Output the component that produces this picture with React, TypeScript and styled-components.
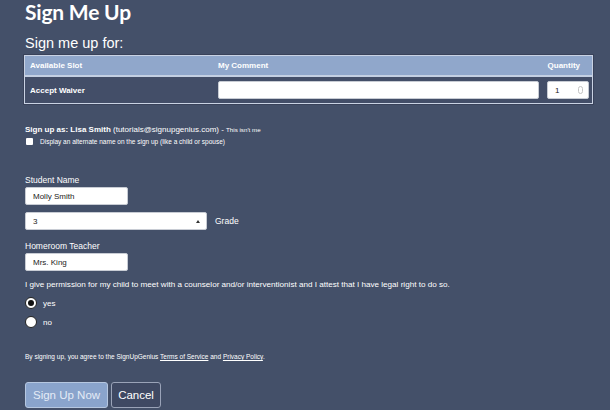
import React from "react";
import styled, { createGlobalStyle } from "styled-components";

const GlobalStyle = createGlobalStyle`
  html, body {
    margin: 0;
    padding: 0;
    background: #445069;
    overflow: hidden;
  }
  body {
    font-family: "Liberation Sans", Arial, sans-serif;
    color: #ffffff;
  }
`;

const Page = styled.div`
  width: 610px;
  height: 410px;
  padding: 0 17px 0 24px;
  box-sizing: border-box;
  background: #445069;
`;

const Title = styled.h1`
  margin: 0;
  padding: 1px 0 0 1px;
  font-family: Lato, "Open Sans", sans-serif;
  font-weight: 700;
  font-size: 21px;
  line-height: 22px;
  letter-spacing: -0.2px;
  color: #ffffff;
`;

const SubTitle = styled.h2`
  margin: 10px 0 0 1px;
  font-weight: 400;
  font-size: 14.5px;
  line-height: 20px;
  color: #ffffff;
`;

const Table = styled.div`
  margin-top: 2px;
  border: 1px solid #c9d2e3;
  box-shadow: 0 0 0 1px #39425a;
`;

const HeaderRow = styled.div`
  display: grid;
  grid-template-columns: 188px 1fr 60px;
  height: 19px;
  align-items: center;
  background: #90a7cb;
  border-bottom: 2px solid #c3cfe2;
  font-size: 8px;
  font-weight: 700;
  padding: 0 5px;
`;

const BodyRow = styled.div`
  display: grid;
  grid-template-columns: 180px 1fr 42px;
  column-gap: 8px;
  height: 26px;
  align-items: center;
  padding: 0 3px 0 5px;
  font-size: 8px;
  font-weight: 700;
  background: #434e68;
`;

const HeadCell = styled.span<{ $right?: boolean }>`
  text-align: ${(p) => (p.$right ? "right" : "left")};
  padding-right: ${(p) => (p.$right ? "7px" : "0")};
`;

const TextBox = styled.div<{ $w?: number }>`
  width: ${(p) => (p.$w ? `${p.$w}px` : "auto")};
  height: 18px;
  background: #ffffff;
  border-radius: 2px;
  border: 1px solid #c8ccd4;
  box-sizing: border-box;
  color: #222;
  font-size: 8px;
  font-weight: 400;
  display: flex;
  align-items: center;
  padding-left: 7px;
  position: relative;
`;

const Spinner = styled.span`
  position: absolute;
  right: 5px;
  top: 4px;
  width: 5px;
  height: 8px;
  border-radius: 3px;
  border: 1px solid #c4c4c4;
  box-sizing: border-box;
`;

const SignUpAs = styled.div`
  margin-top: 21px;
  font-size: 8px;
  padding-left: 1px;
  b {
    font-weight: 700;
  }
  small {
    font-size: 6.2px;
  }
`;

const CheckRow = styled.label`
  display: flex;
  align-items: center;
  gap: 7px;
  margin-top: 4px;
  font-size: 6.5px;
  padding-left: 2px;
`;

const Box = styled.span`
  width: 7px;
  height: 7px;
  background: #ffffff;
  border-radius: 1px;
`;

const Field = styled.div<{ $top: number }>`
  margin-top: ${(p) => p.$top}px;
  padding-left: 1px;
`;

const Label = styled.div`
  font-size: 8.5px;
  line-height: 10px;
  margin-bottom: 2px;
`;

const SelectRow = styled.div`
  display: flex;
  align-items: center;
  gap: 8px;
  margin-top: 7px;
  padding-left: 1px;
  font-size: 8.5px;
`;

const Caret = styled.span`
  position: absolute;
  right: 6px;
  top: 7px;
  width: 0;
  height: 0;
  border-left: 2px solid transparent;
  border-right: 2px solid transparent;
  border-bottom: 3px solid #333;
`;

const Permission = styled.p`
  margin: 9px 0 0 1px;
  font-size: 8.1px;
  line-height: 10px;
`;

const RadioRow = styled.div<{ $top: number }>`
  display: flex;
  align-items: center;
  gap: 6px;
  margin-top: ${(p) => p.$top}px;
  padding-left: 1px;
  font-size: 8px;
`;

const Radio = styled.span<{ $on?: boolean }>`
  width: 12px;
  height: 12px;
  border-radius: 50%;
  background: #ffffff;
  box-sizing: border-box;
  border: 1.5px solid #222;
  display: flex;
  align-items: center;
  justify-content: center;
  &::after {
    content: "";
    width: 6px;
    height: 6px;
    border-radius: 50%;
    background: ${(p) => (p.$on ? "#111" : "transparent")};
  }
`;

const Terms = styled.p`
  margin: 25px 0 0 1px;
  font-size: 6.5px;
  line-height: 8px;
  a {
    color: #ffffff;
    text-decoration: underline;
  }
`;

const Buttons = styled.div`
  display: flex;
  gap: 3px;
  margin-top: 21px;
  padding-left: 1px;
`;

const Button = styled.button<{ $primary?: boolean }>`
  height: 26px;
  padding: 0 ${(p) => (p.$primary ? "7px" : "6px")};
  font-family: "Liberation Sans", Arial, sans-serif;
  font-size: 11.5px;
  color: ${(p) => (p.$primary ? "#e4ebf6" : "#ffffff")};
  background: ${(p) => (p.$primary ? "#8aa4cc" : "#3f4963")};
  border: 1px solid ${(p) => (p.$primary ? "#b6c7e0" : "#9aa3b8")};
  border-radius: 3px;
`;

export default function App() {
  return (
    <>
      <GlobalStyle />
      <Page>
        <Title>Sign Me Up</Title>
        <SubTitle>Sign me up for:</SubTitle>
        <Table>
          <HeaderRow>
            <HeadCell>Available Slot</HeadCell>
            <HeadCell>My Comment</HeadCell>
            <HeadCell $right>Quantity</HeadCell>
          </HeaderRow>
          <BodyRow>
            <span>Accept Waiver</span>
            <TextBox />
            <TextBox>
              1<Spinner />
            </TextBox>
          </BodyRow>
        </Table>

        <SignUpAs>
          <b>Sign up as: Lisa Smith</b> (tutorials@signupgenius.com) - <small>This isn't me</small>
        </SignUpAs>
        <CheckRow>
          <Box />
          Display an alternate name on the sign up (like a child or spouse)
        </CheckRow>

        <Field $top={30}>
          <Label>Student Name</Label>
          <TextBox $w={103}>Molly Smith</TextBox>
        </Field>
        <SelectRow>
          <TextBox $w={182}>
            3<Caret />
          </TextBox>
          <span>Grade</span>
        </SelectRow>
        <Field $top={11}>
          <Label>Homeroom Teacher</Label>
          <TextBox $w={103}>Mrs. King</TextBox>
        </Field>

        <Permission>
          I give permission for my child to meet with a counselor and/or interventionist and I attest that I have legal right to do so.
        </Permission>
        <RadioRow $top={7}>
          <Radio $on />
          yes
        </RadioRow>
        <RadioRow $top={7}>
          <Radio />
          no
        </RadioRow>

        <Terms>
          By signing up, you agree to the SignUpGenius <a>Terms of Service</a> and <a>Privacy Policy</a>.
        </Terms>
        <Buttons>
          <Button $primary>Sign Up Now</Button>
          <Button>Cancel</Button>
        </Buttons>
      </Page>
    </>
  );
}
